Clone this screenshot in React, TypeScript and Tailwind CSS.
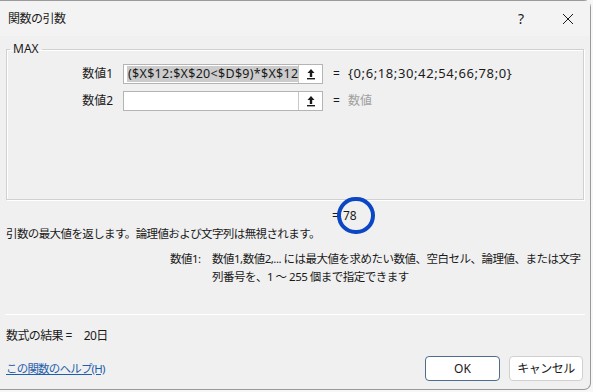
const font = { fontFamily: '"Noto Sans", "Noto Sans CJK JP", sans-serif' }

function RefButton() {
  return (
    <div className="w-[24px] h-full bg-white border-l border-[#c8c8c8] flex items-center justify-center">
      <svg width="10" height="12" viewBox="0 0 10 12">
        <path d="M5 1 L1.5 5 H3.8 V9 H6.2 V5 H8.5 Z" fill="#1a1a1a" />
        <rect x="1" y="10" width="8" height="1.4" fill="#1a1a1a" />
      </svg>
    </div>
  )
}

function ArgRow({ label, value, selected, result, muted }: { label: string; value: string; selected?: boolean; result: string; muted?: boolean }) {
  return (
    <div className="flex items-center h-[20px]">
      <div className="w-[108px] text-right pr-[2px] text-[12px] text-[#1a1a1a]">{label}</div>
      <div className="ml-[8px] w-[200px] h-full flex border border-[#b4b4b4] bg-white">
        <div className="flex-1 flex items-center px-[3px] overflow-hidden whitespace-nowrap">
          {value && (
            <span className={selected ? 'bg-[#cccccc] text-[12.5px] tracking-[0.3px] text-[#1a1a1a] leading-[16px] pl-[1px]' : 'text-[12px]'}>{value}</span>
          )}
        </div>
        <RefButton />
      </div>
      <div className="ml-[10px] text-[12px] text-[#1a1a1a] w-[12px]">=</div>
      <div className={'ml-[3px] ' + (muted ? 'text-[12px] text-[#a0a0a0]' : 'text-[13px] tracking-[0.6px] text-[#1a1a1a]')}>{result}</div>
    </div>
  )
}

export default function App() {
  return (
    <div className="w-[593px] h-[392px] bg-[#f7f7f7] overflow-hidden flex" style={font}>
      <div className="w-[591px] h-[390px] bg-[#f0f0f0] border-r border-b border-t border-[#9a9a9a] rounded-tr-[7px] rounded-br-[7px] flex flex-col text-[#1a1a1a]">
        {/* title bar */}
        <div className="h-[35px] flex items-center bg-[#f3f3f3] pl-[8px]">
          <span className="text-[12px] tracking-[-0.5px]">関数の引数</span>
          <span className="ml-auto text-[14px] mr-[38px]">?</span>
          <svg className="mr-[16px]" width="12" height="12" viewBox="0 0 12 12">
            <path d="M1 1 L11 11 M11 1 L1 11" stroke="#1a1a1a" strokeWidth="1" />
          </svg>
        </div>

        {/* argument group */}
        <fieldset className="mx-[6px] mt-[6px] h-[158px] border border-[#d0d0d0] shadow-[inset_1px_1px_0_#ffffff,1px_1px_0_#ffffff] px-0">
          <legend className="ml-[3px] px-[3px] text-[12px] leading-[14px]">MAX</legend>
          <div className="flex flex-col gap-[7px] mt-[8px]">
            <ArgRow label="数値1" value="($X$12:$X$20<$D$9)*$X$12" selected result="{0;6;18;30;42;54;66;78;0}" />
            <ArgRow label="数値2" value="" result="数値" muted />
          </div>
        </fieldset>

        {/* result + description */}
        <div className="relative h-[20px] mt-[6px]">
          <div className="absolute left-[332px] top-[1px] text-[12px] flex gap-[4px]">
            <span>=</span>
            <span>78</span>
          </div>
          <div className="absolute left-[337px] top-[-9px] w-[38px] h-[37px] rounded-full border-[4px] border-[#0b46c4]" />
        </div>
        <div className="pl-[6px] text-[11.5px] tracking-[-0.6px] leading-[16px]">
          引数の最大値を返します。論理値および文字列は無視されます。
        </div>

        <div className="flex mt-[8px] text-[11.5px] leading-[18px] tracking-[-0.5px]">
          <div className="ml-[170px] w-[42px]">数値1:</div>
          <div className="w-[375px]">
            数値1,数値2,... には最大値を求めたい数値、空白セル、論理値、または文字列番号を、1 ～ 255 個まで指定できます
          </div>
        </div>

        <div className="mt-[28px] mx-[5px] h-px bg-[#d6d6d6] border-b border-white" />

        <div className="pl-[6px] mt-[12px] text-[12px] tracking-[-0.6px] flex">
          <span>数式の結果 =</span>
          <span className="ml-[12px]">20日</span>
        </div>

        <div className="flex items-center mt-[11px] pl-[6px] pr-[7px]">
          <a className="text-[11.5px] text-[#1f5fad] underline tracking-[-0.8px]">この関数のヘルプ(H)</a>
          <button className="ml-auto w-[75px] h-[25px] bg-white border border-[#4d6d8e] rounded-[4px] text-[12px]">OK</button>
          <button className="ml-[9px] w-[74px] h-[25px] bg-white border border-[#d0d0d0] rounded-[4px] text-[12px] tracking-[-0.5px]">キャンセル</button>
        </div>
      </div>
    </div>
  )
}
